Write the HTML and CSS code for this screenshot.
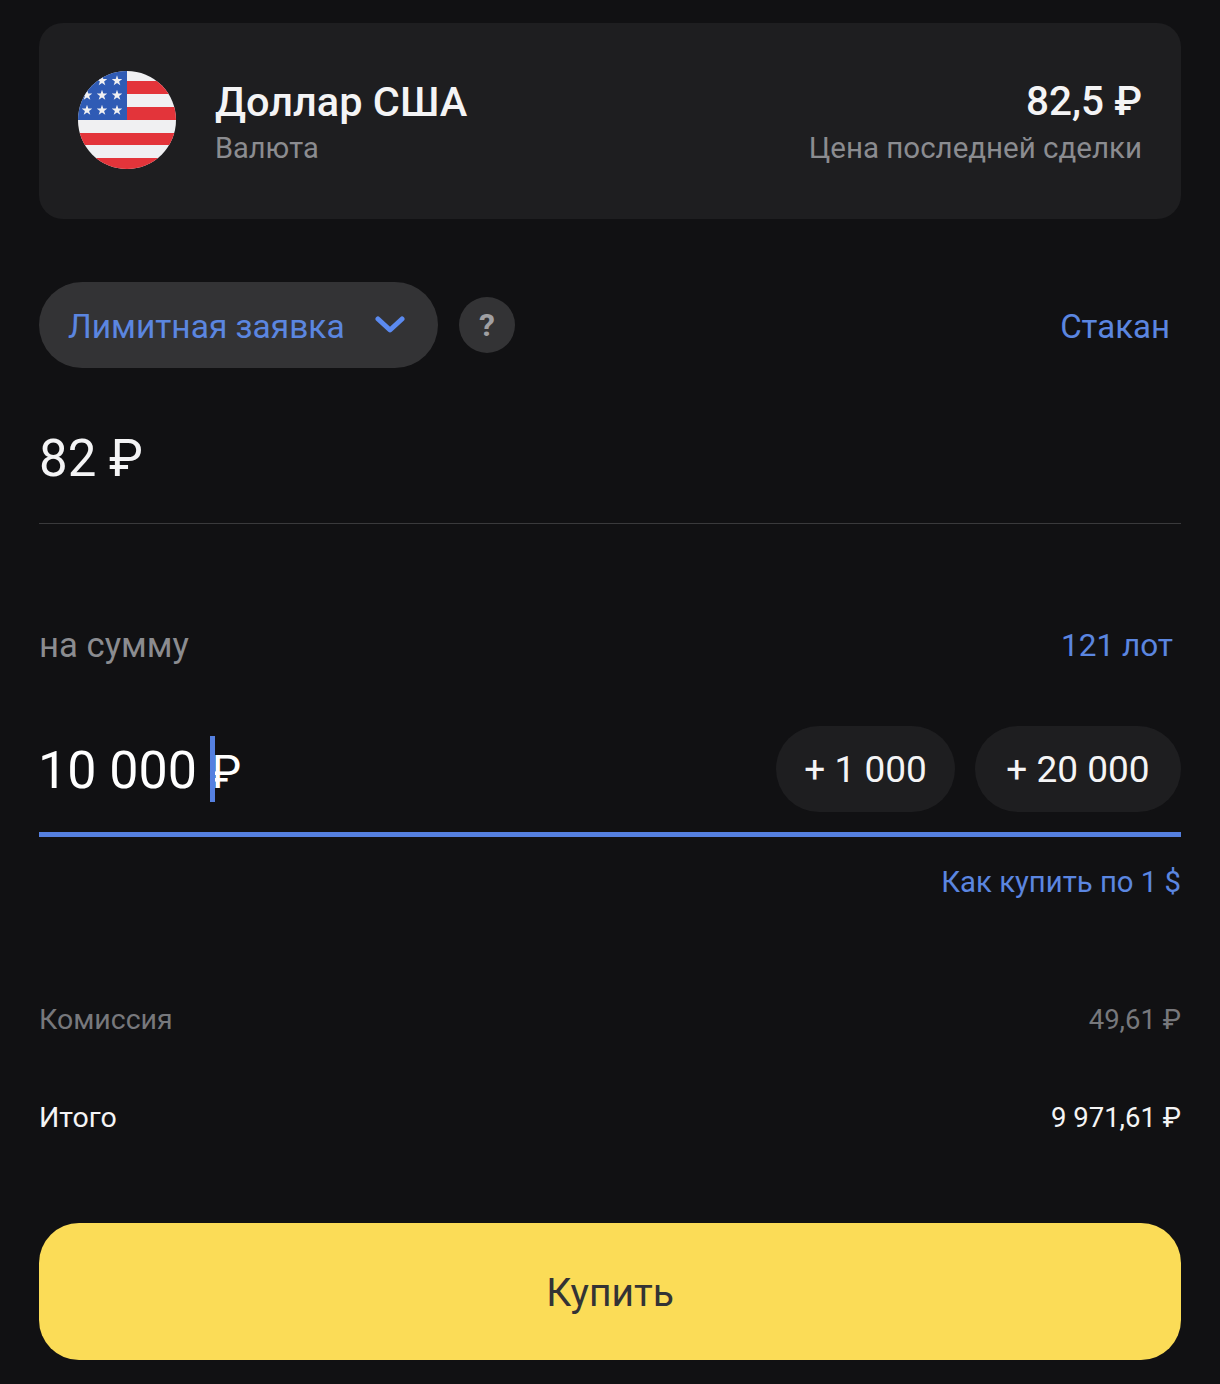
FILE: index.html
```html
<!DOCTYPE html>
<html lang="ru">
<head>
    <meta charset="UTF-8">
    <meta name="viewport" content="width=device-width, initial-scale=1.0">
    <title>Купить доллар США</title>
    <link rel="stylesheet" href="styles.css">
</head>
<body>
    <div class="page">
        <div class="card">
            <svg class="flag" viewBox="0 0 98 98">
                <defs>
                    <clipPath id="flag-clip"><circle cx="49" cy="49" r="49"/></clipPath>
                </defs>
                <g clip-path="url(#flag-clip)">
                    <rect width="98" height="98" fill="#f0f0f2"/>
                    <rect x="49" y="10" width="49" height="13" fill="#e3343a"/>
                    <rect x="49" y="36" width="49" height="13" fill="#e3343a"/>
                    <rect y="62" width="98" height="12" fill="#e3343a"/>
                    <rect y="87" width="98" height="11" fill="#e3343a"/>
                    <rect width="49" height="49" fill="#2f5bb5"/>
                    <g fill="#f0f0f2">
                        <polygon id="star" points="24,4.2 25.3,8 29.3,8 26.1,10.4 27.3,14.3 24,12 20.7,14.3 21.9,10.4 18.7,8 22.7,8"/>
                        <use href="#star" x="15"/>
                        <use href="#star" x="-15" y="14.5"/>
                        <use href="#star" y="14.5"/>
                        <use href="#star" x="15" y="14.5"/>
                        <use href="#star" x="-15" y="29.5"/>
                        <use href="#star" y="29.5"/>
                        <use href="#star" x="15" y="29.5"/>
                    </g>
                </g>
            </svg>
            <div class="card-info">
                <div class="card-title">Доллар США</div>
                <div class="card-sub">Валюта</div>
            </div>
            <div class="card-price">
                <div class="card-title card-title-price">82,5 ₽</div>
                <div class="card-sub">Цена последней сделки</div>
            </div>
        </div>

        <div class="order-row">
            <div class="order-type">
                <span>Лимитная заявка</span>
                <svg class="chevron" viewBox="0 0 30 18"><path d="M3 3 L15 14 L27 3" fill="none" stroke="#5b8af0" stroke-width="5" stroke-linecap="round" stroke-linejoin="round"/></svg>
            </div>
            <div class="help">?</div>
            <a class="link glass">Стакан</a>
        </div>

        <div class="price-field">82 ₽</div>

        <div class="sum-row">
            <span class="sum-label">на сумму</span>
            <a class="link lots">121 лот</a>
        </div>

        <div class="amount-field">
            <div class="amount">10 000 <span class="caret-wrap"><span class="caret"></span>₽</span></div>
            <div class="chips">
                <div class="chip">+ 1 000</div>
                <div class="chip chip-wide">+ 20 000</div>
            </div>
        </div>

        <div class="how-to"><a class="link">Как купить по 1 $</a></div>

        <div class="line muted">
            <span>Комиссия</span>
            <span class="value">49,61 ₽</span>
        </div>
        <div class="line total">
            <span>Итого</span>
            <span class="value">9 971,61 ₽</span>
        </div>

        <button class="buy">Купить</button>
    </div>
</body>
</html>
```

FILE: styles.css
```css
* {
box-sizing: border-box;
}

html,
body {
margin: 0;
height: 100%;
background: #111113;
}

body {
font-family: Roboto, "Noto Sans", sans-serif;
color: #fff;
}

.page {
padding: 23px 39px 0;
}

.card {
height: 196px;
padding: 0 39px;
display: flex;
align-items: center;
background: #1e1e20;
border-radius: 24px;
}

.flag {
width: 98px;
height: 98px;
margin-right: 39px;
margin-top: -3px;
flex-shrink: 0;
}

.card-info {
flex: 1;
}

.card-price {
text-align: right;
}

.card-title {
font-size: 41.5px;
line-height: 53px;
font-weight: 500;
color: #f4f4f5;
}

.card-title-price {
font-size: 40.5px;
}

.card-sub {
font-size: 29px;
line-height: 40px;
color: #8b8c90;
}

.card-price .card-sub {
font-size: 29.5px;
}

.order-row {
margin-top: 63px;
display: flex;
align-items: center;
}

.order-type {
width: 399px;
height: 86px;
padding: 0 33px 0 29px;
display: flex;
align-items: center;
justify-content: space-between;
background: #333335;
border-radius: 43px;
font-size: 33.5px;
color: #5b86e0;
}

.order-type span {
margin-top: 2px;
}

.chevron {
width: 30px;
height: 18px;
margin-top: -1px;
}

.help {
width: 56px;
height: 56px;
margin-left: 21px;
display: flex;
align-items: center;
justify-content: center;
background: #333335;
border-radius: 50%;
font-size: 32px;
font-weight: 700;
color: #a0a0a3;
}

.link {
color: #5b86e0;
}

.glass {
margin-left: auto;
margin-right: 11px;
margin-top: 2px;
font-size: 33px;
}

.price-field {
height: 156px;
padding-top: 59px;
border-bottom: 1px solid #3a3a3c;
font-size: 51px;
line-height: 64px;
color: #f4f4f5;
}

.sum-row {
margin-top: 99px;
display: flex;
justify-content: space-between;
align-items: center;
height: 44px;
}

.sum-label {
font-size: 34.7px;
color: #8b8c90;
}

.lots {
font-size: 31.5px;
margin-right: 8px;
}

.amount-field {
margin-top: 60px;
height: 110px;
padding-bottom: 22px;
display: flex;
align-items: center;
justify-content: space-between;
border-bottom: 5px solid #5580e0;
}

.amount {
margin-top: 4px;
margin-left: -1px;
font-size: 52px;
color: #fff;
}

.caret-wrap {
position: relative;
font-size: 47px;
}

.caret {
position: absolute;
left: 0;
top: -8px;
width: 5px;
height: 66px;
background: #5580e0;
}

.chips {
display: flex;
gap: 20px;
}

.chip {
width: 179px;
height: 86px;
padding-top: 2px;
display: flex;
align-items: center;
justify-content: center;
background: #1e1e20;
border-radius: 43px;
font-size: 37px;
color: #f4f4f5;
}

.chip-wide {
width: 206px;
}

.how-to {
margin-top: 28px;
height: 44px;
text-align: right;
font-size: 29.3px;
}

.line {
display: flex;
justify-content: space-between;
align-items: center;
font-size: 28.5px;
line-height: 40px;
}

.value {
font-size: 27.5px;
padding-top: 1px;
}

.muted {
margin-top: 90px;
color: #77787c;
}

.total {
margin-top: 57px;
color: #f4f4f5;
}

.buy {
display: block;
width: 100%;
height: 137px;
margin-top: 85px;
padding-top: 3px;
border: none;
border-radius: 40px;
background: #fbdc57;
font-family: inherit;
font-size: 39px;
color: #333335;
}
```
